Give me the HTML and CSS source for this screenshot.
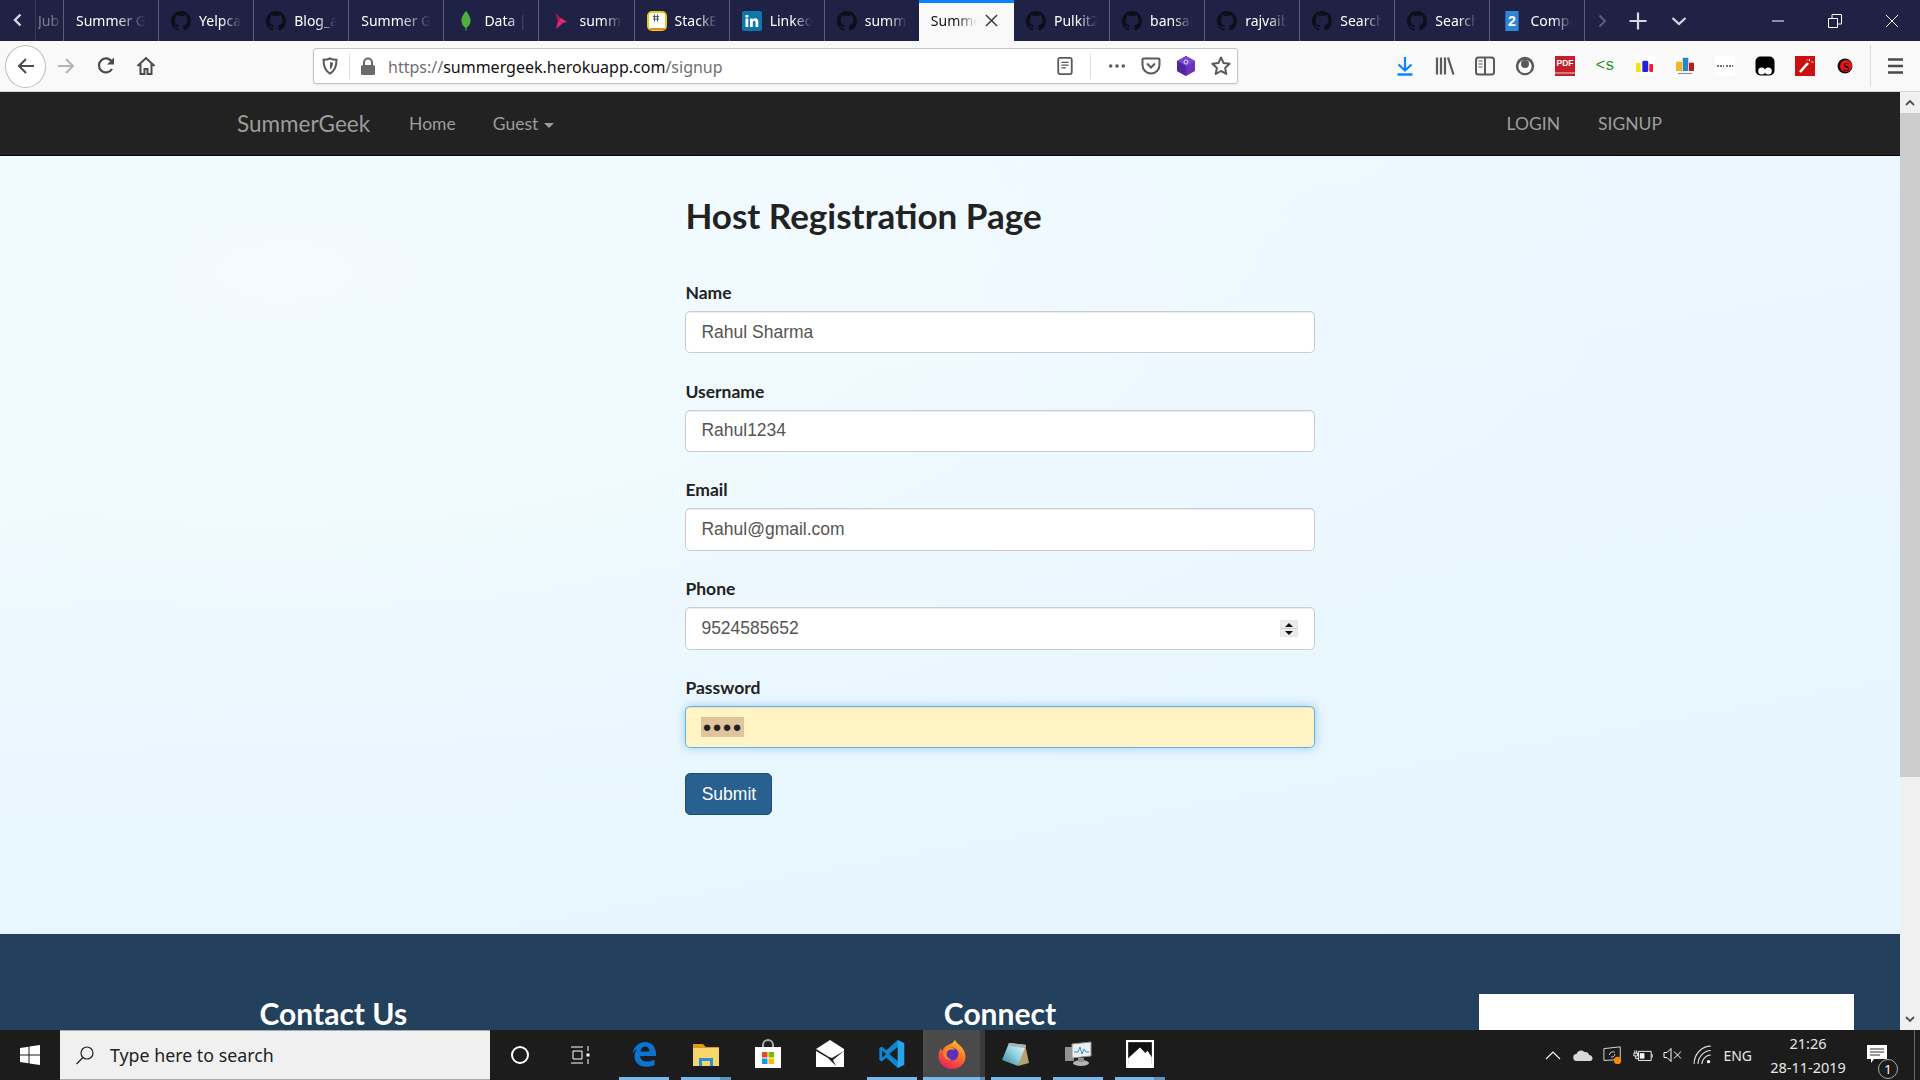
FILE: index.html
```html
<!DOCTYPE html>
<html lang="en">
<head>
<meta charset="utf-8">
<title>SummerGeek</title>
<link rel="stylesheet" href="styles.css">
</head>
<body>
<svg class="defs" width="0" height="0">
  <symbol id="gh" viewBox="0 0 16 16"><path d="M8 0C3.58 0 0 3.58 0 8c0 3.54 2.29 6.53 5.47 7.59.4.07.55-.17.55-.38 0-.19-.01-.82-.01-1.49-2.01.37-2.53-.49-2.69-.94-.09-.23-.48-.94-.82-1.13-.28-.15-.68-.52-.01-.53.63-.01 1.08.58 1.23.82.72 1.21 1.87.87 2.33.66.07-.52.28-.87.51-1.07-1.78-.2-3.64-.89-3.64-3.95 0-.87.31-1.59.82-2.15-.08-.2-.36-1.02.08-2.12 0 0 .67-.21 2.2.82.64-.18 1.32-.27 2-.27.68 0 1.36.09 2 .27 1.53-1.04 2.2-.82 2.2-.82.44 1.1.16 1.92.08 2.12.51.56.82 1.27.82 2.15 0 3.07-1.87 3.75-3.65 3.95.29.25.54.73.54 1.48 0 1.07-.01 1.93-.01 2.2 0 .21.15.46.55.38A8.013 8.013 0 0016 8c0-4.42-3.58-8-8-8z"/></symbol>
</svg>

<header class="tabstrip">
  <div class="scroll-left"><svg class="i16" viewBox="0 0 16 16"><path d="M10.500 2.500 5 8l5.500 5.500" fill="none" stroke="#d7d8e0" stroke-width="2.400"/></svg></div>
  <div class="tab tab-cut"><span class="tab-label">Jub</span></div>
  <div class="tab"><span class="tab-label">Summer Geek</span></div>
  <div class="tab"><svg class="fav gh"><use href="#gh"/></svg><span class="tab-label">Yelpcamp</span></div>
  <div class="tab"><svg class="fav gh"><use href="#gh"/></svg><span class="tab-label">Blog_app</span></div>
  <div class="tab"><span class="tab-label">Summer Geek</span></div>
  <div class="tab"><svg class="fav" viewBox="0 0 20 20"><path d="M10 0c3 3.500 4.600 6.400 4.600 9.600 0 3.700-2.400 6.300-4 7.200l-.2 3h-.8l-.2-3c-1.600-.9-4-3.500-4-7.200C5.400 6.400 7 3.500 10 0z" fill="#4caf3f"/></svg><span class="tab-label">Data | mLab</span></div>
  <div class="tab"><svg class="fav" viewBox="0 0 20 20"><path d="M4 2l6 5-3 3z" fill="#a8174f"/><path d="M7 10l3-3 6 4-4 1z" fill="#e8256f"/><path d="M7 10l5 2-7 6z" fill="#e8256f"/></svg><span class="tab-label">summer</span></div>
  <div class="tab"><svg class="fav" viewBox="0 0 20 20"><rect x="1" y="1" width="18" height="18" rx="4" fill="#fff" stroke="#e8c91f" stroke-width="2"/><path d="M3 18h15" stroke="#f08a1c" stroke-width="2"/><path d="M6 8h6M6 5.500h6M7.500 3.500v7M10.500 3.500v7" stroke="#555" stroke-width="1"/></svg><span class="tab-label">StackEdit</span></div>
  <div class="tab"><svg class="fav" viewBox="0 0 20 20"><rect width="20" height="20" rx="2" fill="#0e76a8"/><path d="M3.500 7.500h2.800V16H3.500zM3.500 4h2.800v2.400H3.500zM8 7.500h2.600v1.200c.6-.9 1.500-1.400 2.700-1.400 2 0 3 1.300 3 3.600V16h-2.800v-4.500c0-1.100-.4-1.800-1.300-1.800s-1.400.7-1.400 1.800V16H8z" fill="#fff"/></svg><span class="tab-label">LinkedIn</span></div>
  <div class="tab"><svg class="fav gh"><use href="#gh"/></svg><span class="tab-label">summer</span></div>
  <div class="tab tab-active"><span class="tab-label">Summer Geek</span><svg class="tab-close" viewBox="0 0 14 14"><path d="M1 1l12 12M13 1 1 13" stroke="#3a3a3f" stroke-width="1.600"/></svg></div>
  <div class="tab tab-after"><svg class="fav gh"><use href="#gh"/></svg><span class="tab-label">Pulkit2</span></div>
  <div class="tab"><svg class="fav gh"><use href="#gh"/></svg><span class="tab-label">bansal</span></div>
  <div class="tab"><svg class="fav gh"><use href="#gh"/></svg><span class="tab-label">rajvaibh</span></div>
  <div class="tab"><svg class="fav gh"><use href="#gh"/></svg><span class="tab-label">Search</span></div>
  <div class="tab"><svg class="fav gh"><use href="#gh"/></svg><span class="tab-label">Search</span></div>
  <div class="tab tab-last"><svg class="fav" viewBox="0 0 20 24"><rect x="2" width="16" height="24" rx="1" fill="#2f86d8"/><text x="10" y="18" class="fav-num">2</text></svg><span class="tab-label">Compress</span></div>
  <div class="strip-tools">
    <svg class="i16" viewBox="0 0 16 16"><path d="M5.500 2.500 11 8l-5.500 5.500" fill="none" stroke="#5c5e78" stroke-width="2"/></svg>
    <svg class="i20" viewBox="0 0 20 20"><path d="M10 1.500v17M1.500 10h17" stroke="#d7d8e0" stroke-width="2.200"/></svg>
    <svg class="i16 strip-chev" viewBox="0 0 16 16"><path d="M1.500 5 8 11l6.500-6" fill="none" stroke="#d7d8e0" stroke-width="2.200"/></svg>
  </div>
  <div class="win-controls">
    <svg class="i14" viewBox="0 0 14 14"><path d="M1 7h12" stroke="#fff" stroke-width="1"/></svg>
    <svg class="i14" viewBox="0 0 14 14"><path d="M.5 4.500h9v9h-9zM4 4.500V.5h9.500v9.500H9.500" fill="none" stroke="#fff" stroke-width="1"/></svg>
    <svg class="i14" viewBox="0 0 14 14"><path d="M1 1l12 12M13 1 1 13" stroke="#fff" stroke-width="1"/></svg>
  </div>
</header>

<nav class="toolbar">
  <div class="back-btn"><svg class="i20" viewBox="0 0 20 20"><path d="M18 10H3M10 3 3 10l7 7" fill="none" stroke="#4a4a4f" stroke-width="2"/></svg></div>
  <div class="tool-btn"><svg class="i20" viewBox="0 0 20 20"><path d="M18 10H3M10 3 3 10l7 7" fill="none" stroke="#b5b5b7" stroke-width="2" transform="matrix(-1 0 0 1 20 0)"/></svg></div>
  <div class="tool-btn"><svg class="i20" viewBox="0 0 20 20"><path d="M16 13a7 7 0 1 1 .3-6.500" fill="none" stroke="#4a4a4f" stroke-width="2.200"/><path d="M18 1.500v7h-7z" fill="#4a4a4f"/></svg></div>
  <div class="tool-btn"><svg class="i20" viewBox="0 0 20 20"><path d="M1.500 10 10 2l8.500 8M4.500 8v10h4v-5h3v5h4V8" fill="none" stroke="#4a4a4f" stroke-width="2"/></svg></div>
  <div class="urlbar">
    <svg class="i18 url-shield" viewBox="0 0 18 18"><path d="M9 1.500c2 1 4 1.300 6.500 1.300 0 6.500-1.500 11-6.500 13.700C4 13.800 2.500 9.300 2.500 2.800 5 2.800 7 2.500 9 1.500z" fill="none" stroke="#5a5a5e" stroke-width="2"/><path d="M9 5c1 .4 2 .6 3 .6 0 3.200-.8 5.400-3 7z" fill="#5a5a5e"/></svg>
    <span class="url-sep"></span>
    <svg class="i18 url-lock" viewBox="0 0 18 18"><rect x="2" y="8" width="14" height="10" rx="1.500" fill="#6a6a6e"/><path d="M5 8V5.500a4 4 0 0 1 8 0V8" fill="none" stroke="#6a6a6e" stroke-width="2"/></svg>
    <span class="url-text">https://<b class="url-host">summergeek.herokuapp.com</b>/signup</span>
    <svg class="i18 url-reader" viewBox="0 0 18 20"><rect x="1.500" y="1" width="15" height="18" rx="2" fill="none" stroke="#5a5a5e" stroke-width="2"/><path d="M5 6h8M5 9h8M5 12h5" stroke="#5a5a5e" stroke-width="1.500"/></svg>
    <span class="url-sep url-sep-right"></span>
    <svg class="i18 url-dots" viewBox="0 0 20 20"><circle cx="3" cy="10" r="2" fill="#5a5a5e"/><circle cx="10" cy="10" r="2" fill="#5a5a5e"/><circle cx="17" cy="10" r="2" fill="#5a5a5e"/></svg>
    <svg class="i20 url-action" viewBox="0 0 20 20"><path d="M2.500 2.500h15c.6 0 1 .4 1 1V9a8.500 8.500 0 0 1-17 0V3.500c0-.6.4-1 1-1z" fill="none" stroke="#5a5a5e" stroke-width="2"/><path d="M6 7.500l4 4 4-4" fill="none" stroke="#5a5a5e" stroke-width="2"/></svg>
    <svg class="i20 url-action" viewBox="0 0 20 20"><path d="M10 0l9 5v10l-9 5-9-5V5z" fill="#6a35b8"/><path d="M10 0l9 5-9 5-9-5z" fill="#7d45d4"/><path d="M10 10v10l-9-5V5z" fill="#52259a"/><circle cx="10" cy="6" r="2" fill="none" stroke="#e4d6fa" stroke-width="1"/></svg>
    <svg class="i20 url-action" viewBox="0 0 20 20"><path d="M10 1.500l2.600 5.600 6 .7-4.500 4.100 1.200 6L10 15l-5.300 3 1.200-6L1.400 7.800l6-.7z" fill="none" stroke="#5a5a5e" stroke-width="2" stroke-linejoin="round"/></svg>
  </div>
  <div class="ext-row">
    <svg class="i20" viewBox="0 0 20 20"><path d="M10 1v13M3.500 8.500l6.500 6 6.500-6" fill="none" stroke="#0a84ff" stroke-width="2.200"/><path d="M2.500 18.500h15" stroke="#0a84ff" stroke-width="2.500"/></svg>
    <svg class="i20" viewBox="0 0 20 20"><path d="M2 1.500v17M6 1.500v17M10 1.500v17M13 1.500l5.500 17" fill="none" stroke="#5a5a5e" stroke-width="2.200"/></svg>
    <svg class="i20" viewBox="0 0 20 20"><rect x="1" y="1.500" width="18" height="17" rx="2.500" fill="none" stroke="#5a5a5e" stroke-width="2"/><path d="M10 1.500v17" stroke="#5a5a5e" stroke-width="2"/><path d="M3.500 5h4M3.500 8h4M3.500 11h4" stroke="#5a5a5e" stroke-width="1.200"/></svg>
    <svg class="i20" viewBox="0 0 20 20"><circle cx="10" cy="10" r="9.200" fill="#5a5a5e"/><circle cx="10" cy="10.500" r="6.600" fill="#fff"/><circle cx="10" cy="8" r="4" fill="#5a5a5e"/></svg>
    <div class="ext-pdf">PDF</div>
    <div class="ext-code">&lt;s</div>
    <svg class="i20 ext-white" viewBox="0 0 20 20"><rect x="1" y="7" width="4.700" height="9" fill="#f4e600"/><rect x="7.300" y="4.700" width="6" height="11.300" rx="1.500" fill="#1f22e0"/><rect x="14.300" y="8" width="3.700" height="8" rx="1" fill="#e82020"/></svg>
    <svg class="i20 ext-white" viewBox="0 0 20 20"><rect x="1" y="5.700" width="6" height="9.300" fill="#f0b71c"/><rect x="7.700" y="1.700" width="5.600" height="13.300" fill="#2b86c5"/><rect x="14" y="6.700" width="5" height="8.300" fill="#b71c1c"/><path d="M3 17.500h14" stroke="#7a8fb5" stroke-width="1.200"/></svg>
    <svg class="i20 ext-white" viewBox="0 0 20 20"><path d="M2 10h7M11 10h7" stroke="#444" stroke-width="1.600" stroke-dasharray="2 1"/></svg>
    <svg class="i20" viewBox="0 0 20 20"><rect x="0.500" y="0.500" width="19" height="19" rx="5" fill="#000"/><circle cx="6.700" cy="15" r="3.500" fill="#fff"/><circle cx="13.300" cy="15" r="3.500" fill="#fff"/></svg>
    <svg class="i20" viewBox="0 0 20 20"><rect width="20" height="20" fill="#cc0f0f"/><path d="M5 16 13 7" stroke="#fff" stroke-width="2.600"/><path d="M14.500 3v2M16.500 6h2M12 3.500l1 1" stroke="#fff" stroke-width="1"/></svg>
    <svg class="i20" viewBox="0 0 20 20"><circle cx="10" cy="10" r="7.500" fill="#111"/><circle cx="11" cy="10" r="6" fill="#ee1414"/><text x="11" y="14.500" class="ext-s">S</text></svg>
  </div>
  <span class="tool-sep"></span>
  <svg class="i20 menu-icon" viewBox="0 0 20 20"><path d="M3 3.500h15M3 10h15M3 16.500h15" stroke="#4a4a4f" stroke-width="2.400"/></svg>
</nav>

<div class="viewport">
  <div class="page">
    <div class="sitenav">
      <a class="brand">SummerGeek</a>
      <a class="navlink">Home</a>
      <a class="navlink">Guest <i class="caret"></i></a>
      <span class="nav-fill"></span>
      <a class="navlink nav-up">LOGIN</a>
      <a class="navlink nav-up">SIGNUP</a>
    </div>
    <main class="main">
      <section class="col-form">
        <h1 class="title">Host Registration Page</h1>
        <div class="group"><label class="lbl">Name</label><input class="field" type="text" value="Rahul Sharma"></div>
        <div class="group"><label class="lbl">Username</label><input class="field" type="text" value="Rahul1234"></div>
        <div class="group"><label class="lbl">Email</label><input class="field" type="text" value="Rahul@gmail.com"></div>
        <div class="group group-num"><label class="lbl">Phone</label><input class="field" type="text" value="9524585652"><span class="spinner"><i class="spin-up"></i><i class="spin-down"></i></span></div>
        <div class="group"><label class="lbl">Password</label><div class="field field-auto"><span class="pw-sel">&#9679;&#9679;&#9679;&#9679;</span></div></div>
        <button class="submit" type="button">Submit</button>
      </section>
    </main>
    <footer class="footer">
      <h2 class="foot-head">Contact Us</h2>
      <h2 class="foot-head">Connect</h2>
      <div class="foot-box"></div>
    </footer>
  </div>
  <aside class="scrollbar">
    <div class="sb-btn"><svg class="i10" viewBox="0 0 10 10"><path d="M1 7l4-4 4 4" fill="none" stroke="#505050" stroke-width="1.800"/></svg></div>
    <div class="sb-thumb"></div>
    <span class="sb-fill"></span>
    <div class="sb-btn"><svg class="i10" viewBox="0 0 10 10"><path d="M1 3l4 4 4-4" fill="none" stroke="#505050" stroke-width="1.800"/></svg></div>
  </aside>
</div>

<div class="taskbar">
  <div class="start"><svg class="i20" viewBox="0 0 20 20"><path d="M0 3l8.500-1.200v7.700H0zM9.500 1.600 20 0v9.500H9.500zM0 10.500h8.500v7.700L0 17zM9.500 10.500H20V20L9.500 18.400z" fill="#fff"/></svg></div>
  <div class="search"><svg class="i20" viewBox="0 0 20 20"><circle cx="12" cy="8" r="6" fill="none" stroke="#222" stroke-width="1.200"/><path d="M8 12.500 1.500 19" stroke="#222" stroke-width="1.200"/></svg><span class="search-text">Type here to search</span></div>
  <div class="task-tool"><svg class="i20" viewBox="0 0 20 20"><circle cx="10" cy="10" r="8" fill="none" stroke="#fff" stroke-width="2"/></svg></div>
  <div class="task-tool"><svg class="i20" viewBox="0 0 20 20"><path d="M1 2h12M1 18h12M3 6h9v8H3zM18 1v5M18 14v5" fill="none" stroke="#fff" stroke-width="1"/><rect x="16.500" y="8.500" width="3" height="3" fill="#fff"/></svg></div>
  <div class="apps">
    <div class="app app-on"><svg class="i28" viewBox="0 0 28 28"><path d="M2.500 15C3 7 9 2 15 2c7 0 11 5 11 12v2H10c.3 3.500 3 5.500 7 5.500 3 0 5.500-.8 7.500-2v5.500c-2.500 1.200-5 1.800-8.500 1.800-7 0-11.500-4.500-11.500-10.500 0-3 1-5.500 3-7.500-2.500 1.500-4 3-5 5.200zM10.500 11.500h9c0-3-1.800-5-4.300-5s-4.200 2-4.700 5z" fill="#0a74d0"/></svg></div>
    <div class="app app-on app-stack"><svg class="i28" viewBox="0 0 28 28"><path d="M1 4h10l3 3h13v4H1z" fill="#d99a1d"/><rect x="1" y="8" width="26" height="18" fill="#f7d66b"/><path d="M7 26v-8h14v8h-3v-5h-8v5z" fill="#2d8fd6"/><rect x="10" y="21" width="8" height="5" fill="#f7d66b"/></svg></div>
    <div class="app"><svg class="i28" viewBox="0 0 28 28"><path d="M9 7V5a5 5 0 0 1 10 0v2" fill="none" stroke="#aaa" stroke-width="2"/><rect x="1" y="7" width="26" height="21" fill="#fff"/><rect x="8" y="12" width="5.500" height="5.500" fill="#e8481f"/><rect x="14.500" y="12" width="5.500" height="5.500" fill="#7fba00"/><rect x="8" y="18.500" width="5.500" height="5.500" fill="#0a9fe8"/><rect x="14.500" y="18.500" width="5.500" height="5.500" fill="#ffb900"/></svg></div>
    <div class="app"><svg class="i28" viewBox="0 0 28 28"><path d="M0 9 14 0l14 9v2L16 18l-3-1z" fill="#fff"/><path d="M0 11v16h28V11L17 20l3 6-8-8z" fill="#fff"/></svg></div>
    <div class="app app-on"><svg class="i28" viewBox="0 0 28 32"><path d="M20 1l7 3.500v23L20 31 8 20l-5 4-2.500-1.500V9.500L3 8l5 4z" fill="#0f85cf"/><path d="M20 1l7 3.500v23L20 31z" fill="#29a5ec"/><path d="M20 8.500v15L11 16z" fill="#1e1e1e"/><path d="M3.500 12v8l4-4z" fill="#1e1e1e"/></svg></div>
    <div class="app app-active"><svg class="i28" viewBox="0 0 28 30"><defs><linearGradient id="ffg" x1="0.800" y1="0" x2="0.300" y2="1"><stop offset="0" stop-color="#ffd02e"/><stop offset="0.500" stop-color="#ff6b2b"/><stop offset="1" stop-color="#e6205f"/></linearGradient></defs><path d="M17 0c0 4 5 5 8 10 2 3 2.500 6 2.500 8 0 6.500-6 12-13.500 12S.5 24.500.5 17c0-3 1-6 2.500-8 0 1.500.6 2.500 1.500 3 .5-3 3-5 5.500-6 3-1.200 6.500-2.500 7-6z" fill="url(#ffg)"/><circle cx="14" cy="15" r="6.500" fill="#5b2fb8"/><path d="M5 14c1-5 6-7 10-5 1 .5 1.500 1 2 2-4-1.500-7 0-8 2-1.500 3.500 1 7 5 7.500-4 1.500-9-2-9-6.500z" fill="#ff8a22"/></svg></div>
    <div class="app app-on"><svg class="i28" viewBox="0 0 28 26"><defs><linearGradient id="npg" x1="0" y1="1" x2="1" y2="0"><stop offset="0" stop-color="#2f7f96"/><stop offset="0.500" stop-color="#8fd0dc"/><stop offset="1" stop-color="#f2fbfc"/></linearGradient></defs><path d="M23 3l4 19-11 3z" fill="#b7a26d"/><path d="M7 2l17 2-8 21-16-6z" fill="url(#npg)"/><path d="M7 2l17 2-1 3-17-2z" fill="#aab3b7"/></svg></div>
    <div class="app app-on"><svg class="i28" viewBox="0 0 28 26"><rect x="1" y="6" width="9" height="14" fill="#8f9396"/><path d="M8 3l19-2v14L8 17z" fill="#e9eef1" stroke="#8b9196"/><path d="M10 11h4l2-5 2 7 2-5 2 3h3" fill="none" stroke="#3a8fc4" stroke-width="1"/><ellipse cx="17" cy="22" rx="8" ry="3" fill="#b5b5b5"/><rect x="14" y="17" width="6" height="4" fill="#8f9396"/></svg></div>
    <div class="app app-on app-stack"><svg class="i28" viewBox="0 0 26 26"><rect width="26" height="26" fill="#fff"/><rect x="2" y="2" width="22" height="20" fill="#111"/><path d="M2 17 13 7l5 5 2-2 4 6v8H2z" fill="#fff"/></svg></div>
  </div>
  <div class="tray">
    <svg class="i20" viewBox="0 0 20 20"><path d="M3 14l7-7 7 7" fill="none" stroke="#fff" stroke-width="1.100"/></svg>
    <svg class="i20" viewBox="0 0 20 14"><path d="M4 13a3.500 3.500 0 0 1-.5-7C4.500 2.500 9 1 11.500 4c3-.5 4.500 1.500 4.500 3 2.500 0 3.500 2 3.500 3.500 0 1.500-1 2.500-2.500 2.500z" fill="#d8d8d8"/></svg>
    <svg class="i20 tray-sync" viewBox="0 0 22 20"><path d="M1 3l18-2v14l-18 1z" fill="none" stroke="#e6e6e6" stroke-width="1"/><path d="M7 10a4 4 0 0 1 6-3M13 9a3 3 0 0 1-4 3" fill="none" stroke="#e6e6e6" stroke-width="1"/><circle cx="16" cy="16" r="4" fill="#f08a00"/></svg>
    <svg class="i20 tray-batt" viewBox="0 0 22 14"><path d="M6 3h14v10H6z" fill="none" stroke="#fff"/><rect x="7.500" y="5" width="5" height="6" fill="#fff"/><path d="M21 6v4" stroke="#fff"/><path d="M1 5h4v3H1zM2 2v3M4 2v3M3 8v3h3" fill="none" stroke="#fff"/></svg>
    <svg class="i20" viewBox="0 0 20 16"><path d="M1 5.500h3l4-4v13l-4-4H1z" fill="none" stroke="#fff"/><path d="M11 4.500l7 7M18 4.500l-7 7" stroke="#fff"/></svg>
    <svg class="i20 tray-wifi" viewBox="0 0 18 18"><path d="M1 17C1 8 8 1 16 1M4.500 17C4.500 11 10 5 16 5M8 17c0-3 3-8 8-8" fill="none" stroke="#ddd" stroke-width="1"/><circle cx="14" cy="15" r="1.500" fill="#fff"/></svg>
    <span class="tray-lang">ENG</span>
    <div class="clock"><span>21:26</span><span>28-11-2019</span></div>
    <div class="notif"><svg class="i20" viewBox="0 0 20 20"><path d="M0 0h20v14H7l-3 4v-4H0z" fill="#fff"/><path d="M3 4h14M3 7h14M3 10h10" stroke="#333"/></svg><span class="notif-badge">1</span></div>
    <span class="tray-end"></span>
  </div>
</div>
</body>
</html>
```
FILE: styles.css
```css
* { box-sizing: border-box; }
html, body { margin: 0; height: 100%; }
body {
  width: 1920px;
  height: 1080px;
  overflow: hidden;
  display: flex;
  flex-direction: column;
  font-family: "Lato", "Liberation Sans", sans-serif;
  background: #fff;
}
.defs { position: absolute; }
svg { display: block; flex: none; }
.i10 { width: 10px; height: 10px; }
.i14 { width: 14px; height: 14px; }
.i16 { width: 16px; height: 16px; }
.i18 { width: 18px; height: 18px; }
.i20 { width: 20px; height: 20px; }
.i28 { width: 28px; height: 30px; }

/* tab strip */
.tabstrip {
  height: 41px;
  flex: none;
  display: flex;
  align-items: stretch;
  background: #1f2245;
  font-family: "Noto Sans", sans-serif;
  font-size: 14px;
  color: #fff;
}
.scroll-left { width: 35px; display: flex; align-items: center; justify-content: center; padding-bottom: 2px; }
.tab {
  width: 95.1px;
  flex: none;
  display: flex;
  align-items: center;
  gap: 8px;
  padding: 0 12px;
  border-left: 1px solid #5c5e78;
  overflow: hidden;
}
.tab-cut { width: 28px; padding: 0 0 0 2px; opacity: .4; }
.tab-label {
  flex: 1;
  min-width: 0;
  white-space: nowrap;
  overflow: hidden;
  -webkit-mask-image: linear-gradient(to right, #000 55%, transparent 100%);
  mask-image: linear-gradient(to right, #000 55%, transparent 100%);
}
.fav { width: 20px; height: 20px; flex: none; }
.fav.gh { fill: #0d0f18; }
.fav-num { font-family: "Liberation Sans", sans-serif; font-size: 17px; font-weight: 700; fill: #fff; text-anchor: middle; }
.tab-active {
  background: #f9f9fa;
  color: #111;
  border-left: 0;
  border-top: 3px solid #0a84ff;
  padding-bottom: 3px;
  padding-right: 16px;
}
.tab-close { width: 13px; height: 13px; flex: none; }
.tab-after { border-left: 0; }
.tab-last { border-right: 1px solid #5c5e78; }
.strip-tools {
  display: flex;
  align-items: center;
  gap: 18px;
  padding-left: 9px;
}
.strip-chev { margin-left: 5px; }
.win-controls {
  margin-left: auto;
  display: flex;
  align-items: center;
  gap: 43px;
  padding-right: 21px;
}

/* browser toolbar */
.toolbar {
  height: 51px;
  flex: none;
  display: flex;
  align-items: center;
  background: #f9f9fa;
  border-bottom: 1px solid #d4d4d6;
  padding-left: 5px;
}
.back-btn {
  width: 41px;
  height: 43px;
  border-radius: 50%;
  border: 1px solid #bdbdbd;
  background: #fff;
  display: flex;
  align-items: center;
  justify-content: center;
}
.tool-btn { width: 40px; display: flex; justify-content: center; }
.urlbar {
  margin-left: 147px;
  width: 925px;
  height: 36px;
  display: flex;
  align-items: center;
  padding-right: 6px;
  background: #fff;
  border: 1px solid #c4c4c6;
  border-radius: 3px;
  box-shadow: 0 1px 2px rgba(0,0,0,.08);
}
.url-shield { margin-left: 7px; }
.url-sep { width: 1px; height: 26px; background: #e0e0e2; margin-left: 10px; }
.url-lock { margin-left: 9px; }
.url-text { margin-left: 11px; padding-top: 2px; font-family: "Noto Sans", sans-serif; font-size: 16px; color: #6f6f73; white-space: nowrap; }
.url-host { font-weight: 400; color: #111; }
.url-reader { margin-left: auto; }
.url-sep-right { margin-left: 16px; }
.url-dots { margin-left: 17px; }
.url-action { margin-left: 15px; }
.ext-row {
  margin-left: 157px;
  display: flex;
  align-items: center;
  gap: 20px;
}
.ext-pdf {
  width: 20px;
  height: 20px;
  background: linear-gradient(to bottom, #c4202c 0 80%, #d9757c 80% 88%, #c4202c 88%);
  color: #fff;
  font: 700 8.5px/15px "Liberation Sans", sans-serif;
  text-align: center;
}
.ext-code { width: 20px; font: 400 16px/20px "Liberation Mono", monospace; color: #1c961c; text-align: center; }
.ext-s { font: 700 12px "Liberation Serif", serif; fill: #111; text-anchor: middle; }
.ext-white { background: #fff; }
.tool-sep { width: 1px; height: 42px; background: #dcdcde; margin-left: 15px; }
.menu-icon { margin-left: 14px; }

/* page */
.viewport { flex: 1; min-height: 0; display: flex; }
.page {
  width: 1900px;
  flex: none;
  overflow: hidden;
  display: flex;
  flex-direction: column;
}
.sitenav {
  height: 64px;
  flex: none;
  display: flex;
  align-items: center;
  background: #222;
  border-bottom: 1px solid #080808;
  padding: 0 238px 0 237px;
  font-size: 17.5px;
  color: #9d9d9d;
}
.brand { font-size: 22.5px; margin-right: 39px; }
.navlink { margin-right: 37px; }
.nav-up { margin-right: 0; margin-left: 38px; }
.nav-fill { flex: 1; }
.sitenav .nav-fill + .nav-up { margin-left: 0; }
.caret {
  display: inline-block;
  vertical-align: middle;
  width: 0; height: 0;
  margin-left: 1px;
  border-top: 5px solid #9d9d9d;
  border-left: 5px solid transparent;
  border-right: 5px solid transparent;
}
.main {
  flex: 1;
  min-height: 0;
  display: grid;
  grid-template-columns: 666.67px 666.67px;
  justify-content: start;
  background:
    radial-gradient(ellipse at 15% 15%, #f3fbff 0%, rgba(243,251,255,0) 60%),
    linear-gradient(170deg, #eef9ff 0%, #e6f5fe 100%);
  color: #111;
}
.col-form { grid-column: 2; padding: 39px 18.75px 0; }
.title {
  margin: 0 0 43.5px;
  font-size: 35px;
  line-height: 41.25px;
  font-weight: 700;
  color: #222;
}
.group { position: relative; margin-bottom: 25.25px; }
.lbl {
  display: block;
  font-size: 17.5px;
  line-height: 25px;
  font-weight: 700;
  margin-bottom: 6px;
  color: #222;
}
.field {
  display: block;
  width: 100%;
  height: 42.5px;
  padding: 0 15px;
  background: #fff;
  border: 1px solid #ccc;
  border-radius: 5px;
  box-shadow: inset 0 1px 1px rgba(0,0,0,.075);
  font: 17.5px "Liberation Sans", sans-serif;
  color: #555;
}
.field-auto {
  display: flex;
  align-items: center;
  background: #fff4c4;
  border-color: #66afe9;
  box-shadow: inset 0 1px 1px rgba(0,0,0,.075), 0 0 10px rgba(102,175,233,.6);
  color: #222;
}
.pw-sel { background: #dfc49d; font-size: 15px; line-height: 20px; padding: 0 1px; letter-spacing: 1px; color: #222; }
.spinner {
  position: absolute;
  right: 17px;
  bottom: 13px;
  width: 18px;
  height: 17px;
  display: flex;
  flex-direction: column;
  gap: 1px;
  background: #cfcfcf;
  border: 1px solid #e6e6e6;
}
.spinner i { flex: 1; position: relative; background: #ececec; }
.spin-up::after, .spin-down::after {
  content: "";
  position: absolute;
  left: 4px; top: 2px;
  border-left: 4px solid transparent;
  border-right: 4px solid transparent;
}
.spin-up::after { border-bottom: 4px solid #111; }
.spin-down::after { border-top: 4px solid #111; }
.submit {
  display: block;
  width: 87px;
  height: 42px;
  margin-top: -1px;
  padding: 1px 0 0;
  background: #286090;
  border: 1px solid #204d74;
  border-radius: 5px;
  color: #fff;
  font: 17.5px "Liberation Sans", sans-serif;
}
.footer {
  height: 96px;
  flex: none;
  width: 2000px;
  display: grid;
  grid-template-columns: repeat(3, 1fr);
  background: #23405c;
  color: #fff;
  padding-top: 60px;
}
.foot-head { margin: 3px 0 0; text-align: center; font-size: 30px; line-height: 33px; font-weight: 700; }
.foot-box { width: 375px; height: 40px; background: #fff; justify-self: center; }

/* page scrollbar */
.scrollbar {
  width: 20px;
  flex: none;
  display: flex;
  flex-direction: column;
  background: #f0f0f0;
}
.sb-btn { height: 21px; display: flex; align-items: center; justify-content: center; flex: none; }
.sb-thumb { height: 664px; background: #cdcdcd; flex: none; }
.sb-fill { flex: 1; }
.sb-btn:last-child { margin-bottom: 1px; }

/* taskbar */
.taskbar {
  height: 50px;
  flex: none;
  display: flex;
  align-items: center;
  background: #1c1c1c;
  color: #fff;
  font-family: "Noto Sans", sans-serif;
}
.start { width: 60px; display: flex; justify-content: center; }
.search {
  width: 430px;
  height: 50px;
  display: flex;
  align-items: center;
  gap: 15px;
  padding-left: 15px;
  background: #f0f0f0;
  border-top: 1px solid #aaa;
  border-bottom: 1px solid #aaa;
  color: #222;
  font-size: 17.8px;
}
.task-tool { width: 60px; display: flex; justify-content: center; }
.task-tool + .task-tool { margin-right: 3px; }
.apps { display: flex; height: 50px; }
.app {
  width: 62px;
  height: 50px;
  display: flex;
  align-items: center;
  justify-content: center;
  border-bottom: 3px solid transparent;
  position: relative;
}
.app-on::after {
  content: "";
  position: absolute;
  left: 6px; right: 6px; bottom: -3px;
  height: 3px;
  background: #76b9ed;
}
.app-stack::after { background: linear-gradient(to right, #76b9ed 0 78%, #5a92bd 78%); }
.app-active {
  background: linear-gradient(to right, #4a4a4a 0 92%, #3a3a3a 92%);
  padding-right: 5px;
}
.app-active::after {
  content: "";
  position: absolute;
  left: 0; right: 0; bottom: -3px;
  height: 3px;
  background: linear-gradient(to right, #76b9ed 0 92%, #5a92bd 92%);
}
.tray {
  margin-left: auto;
  display: flex;
  align-items: center;
  gap: 10px;
  height: 50px;
  font-size: 14.5px;
  color: #e8e8e8;
}
.tray-lang { font-size: 14px; }
.clock { display: flex; flex-direction: column; align-items: center; line-height: 24px; margin-left: 6px; width: 80px; }
.notif { position: relative; margin-left: 9px; width: 24px; padding-top: 0; }
.notif-badge {
  position: absolute;
  left: 11px; top: 14px;
  width: 20px; height: 20px;
  border-radius: 50%;
  border: 1px solid #aaa;
  background: #1c1c1c;
  text-align: center;
  font-size: 13px;
  line-height: 18px;
  color: #fff;
}
.tray-end { width: 1px; height: 50px; background: #666; margin: 0 5px 0 13px; }
```
